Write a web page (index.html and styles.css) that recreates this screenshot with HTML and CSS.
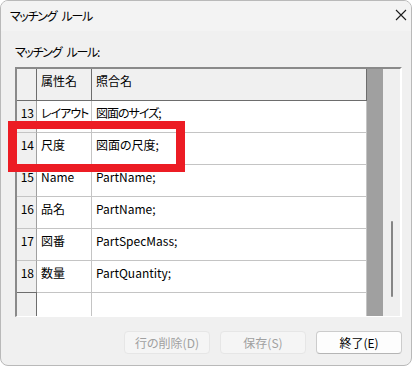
FILE: index.html
```html
<!DOCTYPE html>
<html>
  <head>
    <meta charset="UTF-8" />
    <title>マッチング ルール</title>
    <link rel="stylesheet" href="styles.css">
  </head>
  <body>
    <div class="dialog">
      <!-- TITLE BAR -->
      <div class="titlebar">
        <span class="title kana">マッチング ルール</span>
        <svg class="close" width="12" height="12" viewBox="0 0 12 12">
          <path d="M1 1 L11 11 M11 1 L1 11" stroke="#1b1b1b" stroke-width="1.1" fill="none" />
        </svg>
      </div>

      <div class="content">
        <div class="label kana">マッチング ルール:</div>

        <!-- GRID -->
        <div class="grid">
          <div class="cells">
            <div class="row head">
              <div class="cell rh"></div>
              <div class="cell">属性名</div>
              <div class="cell">照合名</div>
            </div>
            <div class="row">
              <div class="cell rh">13</div>
              <div class="cell kana">レイアウト</div>
              <div class="cell kana">図面のサイズ;</div>
            </div>
            <div class="row">
              <div class="cell rh">14</div>
              <div class="cell">尺度</div>
              <div class="cell">図面の尺度;</div>
            </div>
            <div class="row">
              <div class="cell rh">15</div>
              <div class="cell">Name</div>
              <div class="cell">PartName;</div>
            </div>
            <div class="row">
              <div class="cell rh">16</div>
              <div class="cell">品名</div>
              <div class="cell">PartName;</div>
            </div>
            <div class="row">
              <div class="cell rh">17</div>
              <div class="cell">図番</div>
              <div class="cell">PartSpecMass;</div>
            </div>
            <div class="row">
              <div class="cell rh">18</div>
              <div class="cell">数量</div>
              <div class="cell">PartQuantity;</div>
            </div>
            <div class="row new">
              <div class="cell rh"></div>
              <div class="cell"></div>
              <div class="cell"></div>
            </div>
          </div>
          <div class="filler"></div>
          <div class="scrollbar">
            <div class="thumb"></div>
          </div>
        </div>

        <!-- BUTTONS -->
        <div class="buttons">
          <button class="btn" disabled>行の削除(D)</button>
          <button class="btn" disabled>保存(S)</button>
          <button class="btn">終了(E)</button>
        </div>
      </div>

      <!-- red highlight drawn over row 14 -->
      <div class="highlight"></div>
    </div>
  </body>
</html>
```

FILE: styles.css
```css
body {
  margin: 0;
  background: #ffffff;
  font-family: "Noto Sans CJK JP", sans-serif;
  font-feature-settings: "palt";
  font-size: 12px;
  color: #000000;
}
.kana {
  letter-spacing: -1px;
}
.dialog {
  position: relative;
  width: 412px;
  height: 366px;
  box-sizing: border-box;
  border: 1px solid #b9b9b9;
  border-radius: 8px;
  background: #f0f0f0;
  overflow: hidden;
}
.titlebar {
  height: 30px;
  background: #f3f3f3;
  display: flex;
  align-items: center;
  justify-content: space-between;
  padding: 0 4px 0 9px;
}
.title {
  line-height: 16px;
  letter-spacing: -1.3px;
  word-spacing: 4px;
}
.close {
  width: 12px;
  height: 12px;
  margin-top: -2px;
}
.content {
  padding: 13px 0 0 14px;
}
.label {
  line-height: 16px;
  height: 16px;
  margin-bottom: 7px;
  letter-spacing: -1.3px;
  word-spacing: 4px;
}
.grid {
  display: flex;
  width: 387px;
  height: 250px;
  box-sizing: border-box;
  border-top: 2px solid #8a8a8a;
  border-left: 2px solid #8a8a8a;
  border-right: 2px solid #ffffff;
  border-bottom: 1px solid #ffffff;
  overflow: hidden;
}
.cells {
  width: 350px;
  background: #ffffff;
}
.row {
  display: grid;
  grid-template-columns: 20px 55px 275px;
  height: 32px;
}
.cell {
  box-sizing: border-box;
  border-right: 1px solid #c4c4c4;
  border-bottom: 1px solid #c4c4c4;
  padding: 4px 0 0 4px;
  line-height: 16px;
  white-space: nowrap;
  overflow: hidden;
}
.cell.rh {
  background: #f0f0f0;
  border-right-color: #a0a0a0;
  text-align: right;
  padding: 4px 2px 0 0;
}
.head .cell {
  background: #f0f0f0;
  border-right-color: #6d6d6d;
  border-bottom-color: #6d6d6d;
}
.new .cell.rh {
  border-top: 1px solid #6d6d6d;
  border-right-color: #6d6d6d;
  margin-top: -1px;
}
.filler {
  width: 16px;
  background: #a0a0a0;
}
.scrollbar {
  position: relative;
  width: 17px;
  background: #efefef;
}
.thumb {
  position: absolute;
  left: 8px;
  top: 152px;
  width: 2px;
  height: 76px;
  border-radius: 1px;
  background: #858585;
}
.buttons {
  display: flex;
  justify-content: flex-end;
  gap: 10px;
  width: 387px;
  margin-top: 14px;
}
.btn {
  width: 86px;
  height: 23px;
  box-sizing: border-box;
  border: 1px solid #cccccc;
  border-bottom-color: #b5b5b5;
  border-radius: 4px;
  background: #fdfdfd;
  font-family: "Noto Sans CJK JP", sans-serif;
  font-feature-settings: "palt";
  font-size: 12px;
  color: #000000;
  padding: 0;
}
.btn:disabled {
  background: #f5f5f5;
  border-color: #e6e6e6;
  color: #a0a0a0;
}
.highlight {
  position: absolute;
  left: 7px;
  top: 120px;
  width: 159px;
  height: 35px;
  border-style: solid;
  border-color: #ec1c24;
  border-width: 8px 9px;
}
```
